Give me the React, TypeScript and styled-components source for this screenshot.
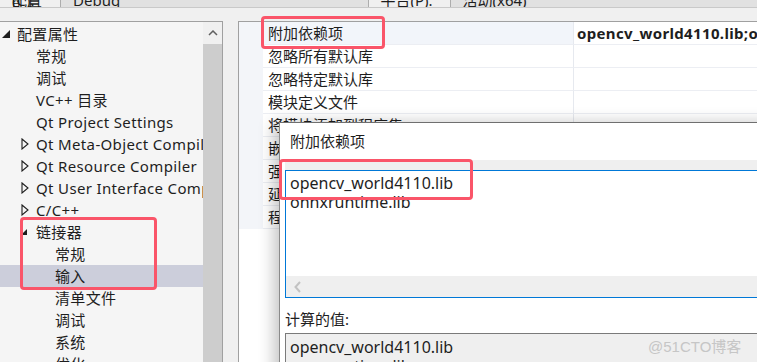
import styled, { createGlobalStyle } from 'styled-components';

const TREE_ITEMS: { label: string; level: number; arrow?: 'open' | 'closed' | 'openSmall'; selected?: boolean }[] = [
  { label: '配置属性', level: 0, arrow: 'open' },
  { label: '常规', level: 1 },
  { label: '调试', level: 1 },
  { label: 'VC++ 目录', level: 1 },
  { label: 'Qt Project Settings', level: 1 },
  { label: 'Qt Meta-Object Compiler', level: 1, arrow: 'closed' },
  { label: 'Qt Resource Compiler', level: 1, arrow: 'closed' },
  { label: 'Qt User Interface Compiler', level: 1, arrow: 'closed' },
  { label: 'C/C++', level: 1, arrow: 'closed' },
  { label: '链接器', level: 1, arrow: 'openSmall' },
  { label: '常规', level: 2 },
  { label: '输入', level: 2, selected: true },
  { label: '清单文件', level: 2 },
  { label: '调试', level: 2 },
  { label: '系统', level: 2 },
  { label: '优化', level: 2 },
];

const PROPERTY_ROWS = [
  '附加依赖项',
  '忽略所有默认库',
  '忽略特定默认库',
  '模块定义文件',
  '将模块添加到程序集',
  '嵌入托管资源文件',
  '强制符号引用',
  '延迟加载的 DLL',
  '程序集链接资源',
];

const GlobalStyle = createGlobalStyle`
  html, body {
    margin: 0;
    padding: 0;
    background: #f0f0f0;
  }
  body {
    font-family: "Noto Sans", "Noto Sans CJK SC", sans-serif;
  }
`;

function App() {
  return (
    <>
      <GlobalStyle />
      <Window>
        <TabBar>
          <Tab>配置(C):</Tab>
          <Tab combo>Debug</Tab>
          <Tab light>平台(P):</Tab>
          <Tab combo>活动(x64)</Tab>
        </TabBar>
        <Main>
          <TreePanel>
            <TreeList>
              {TREE_ITEMS.map((item, i) => (
                <TreeRow key={i} level={item.level} selected={item.selected}>
                  <Arrow>
                    {item.arrow === 'open' && <OpenArrow size={8} />}
                    {item.arrow === 'openSmall' && <OpenArrow size={6} />}
                    {item.arrow === 'closed' && <ClosedArrow />}
                  </Arrow>
                  <TreeLabel>{item.label}</TreeLabel>
                </TreeRow>
              ))}
            </TreeList>
            <VScroll>
              <ScrollButton>
                <svg width="10" height="6" viewBox="0 0 10 6">
                  <path d="M1 5 L5 1 L9 5" fill="none" stroke="#606060" strokeWidth="1.5" />
                </svg>
              </ScrollButton>
              <ScrollThumb />
            </VScroll>
          </TreePanel>
          <GridPanel>
            <GridRows>
              {PROPERTY_ROWS.map((name, i) => (
                <GridRow key={name} selected={i === 0}>
                  <Gutter />
                  <NameCell>{name}</NameCell>
                  <ValueCell>{i === 0 ? 'opencv_world4110.lib;onnxruntime.lib;%(AdditionalDependencies)' : ''}</ValueCell>
                </GridRow>
              ))}
            </GridRows>
          </GridPanel>
        </Main>

        <Dialog>
          <DialogTitle>附加依赖项</DialogTitle>
          <ToolStrip />
          <EditBox>
            <EditText>
              <Line>opencv_world4110.lib</Line>
              <Line>onnxruntime.lib</Line>
            </EditText>
            <HScroll>
              <svg width="8" height="12" viewBox="0 0 8 12">
                <path d="M6 1 L1.5 6 L6 11" fill="none" stroke="#c2c2c2" strokeWidth="2" />
              </svg>
            </HScroll>
          </EditBox>
          <ComputedLabel>计算的值:</ComputedLabel>
          <ComputedBox>
            <Line>opencv_world4110.lib</Line>
            <Line>onnxruntime.lib</Line>
          </ComputedBox>
        </Dialog>

        <Highlight style={{ left: 261, top: 16, width: 124, height: 33 }} />
        <Highlight style={{ left: 279, top: 159, width: 194, height: 41 }} />
        <Highlight style={{ left: 20, top: 217, width: 137, height: 73 }} />
        <Watermark>@51CTO博客</Watermark>
      </Window>
    </>
  );
}

function OpenArrow({ size }: { size: number }) {
  return (
    <svg width={size} height={size} viewBox="0 0 8 8">
      <path d="M8 0 L8 8 L0 8 Z" fill="#1e1e1e" />
    </svg>
  );
}

function ClosedArrow() {
  return (
    <svg width="8" height="12" viewBox="0 0 8 12">
      <path d="M1 1 L7 6 L1 11 Z" fill="none" stroke="#1e1e1e" strokeWidth="1.1" />
    </svg>
  );
}

export default App;

const Window = styled.div`
  position: relative;
  width: 757px;
  height: 362px;
  overflow: hidden;
  background: #f0f0f0;
  color: #1e1e1e;
`;

const TabBar = styled.div`
  display: flex;
  height: 7px;
  overflow: hidden;
  border-bottom: 1px solid #c9c9c9;
  margin-bottom: 13px;
`;

const Tab = styled.div<{ combo?: boolean; light?: boolean }>`
  height: 7px;
  line-height: 0;
  font-size: 15px;
  padding-left: 12px;
  box-sizing: border-box;
  width: ${(p) => (p.combo ? '247px' : '82px')};
  flex: ${(p) => (p.combo ? '1 0 auto' : '0 0 auto')};
  background: ${(p) => (p.combo ? '#e1e1e1' : '#f0f0f0')};
  border-left: 1px solid #adadad;
  overflow: hidden;
  &:first-child {
    width: 60px;
    border-left: none;
  }
`;

const Main = styled.div`
  display: flex;
  height: 341px;
`;

const TreePanel = styled.div`
  display: flex;
  width: 223px;
  border-top: 1px solid #a0a0a0;
  border-right: 1px solid #a0a0a0;
  box-sizing: border-box;
  background: #f5f5f5;
`;

const TreeList = styled.div`
  flex: 1;
  padding-top: 1px;
  overflow: hidden;
`;

const TreeRow = styled.div<{ level: number; selected?: boolean }>`
  display: flex;
  align-items: center;
  height: 22px;
  padding-left: ${(p) => (p.level === 0 ? 2 : p.level === 1 ? 21 : 40)}px;
  background: ${(p) => (p.selected ? '#cccedb' : 'transparent')};
  white-space: nowrap;
`;

const Arrow = styled.span`
  display: inline-flex;
  align-items: center;
  justify-content: flex-start;
  width: 15px;
  flex: 0 0 15px;
`;

const TreeLabel = styled.span`
  font-size: 15px;
  line-height: 22px;
  letter-spacing: 0.35px;
`;

const VScroll = styled.div`
  display: flex;
  flex-direction: column;
  width: 19px;
  background: #f0f0f0;
`;

const ScrollButton = styled.div`
  height: 22px;
  display: flex;
  align-items: center;
  justify-content: center;
`;

const ScrollThumb = styled.div`
  flex: 1;
  background: #cdcdcd;
`;

const GridPanel = styled.div`
  flex: 1;
  margin-left: 15px;
  border-top: 1px solid #a0a0a0;
  border-left: 1px solid #a0a0a0;
  background: #ffffff;
`;

const GridRows = styled.div``;

const GridRow = styled.div<{ selected?: boolean }>`
  display: flex;
  height: 23px;
  background: ${(p) => (p.selected ? '#f2f5fa' : '#ffffff')};
`;

const Gutter = styled.div`
  width: 24px;
  flex: 0 0 24px;
  background: #f3f5f9;
`;

const NameCell = styled.div`
  width: 311px;
  flex: 0 0 311px;
  padding-left: 5px;
  box-sizing: border-box;
  font-size: 15px;
  line-height: 22px;
  border-bottom: 1px solid #eceef3;
  border-right: 1px solid #e6e9ef;
  white-space: nowrap;
  overflow: hidden;
`;

const ValueCell = styled.div`
  flex: 1;
  padding-left: 3px;
  font-size: 15px;
  font-weight: 700;
  line-height: 22px;
  letter-spacing: 0.35px;
  border-bottom: 1px solid #eceef3;
  white-space: nowrap;
  overflow: hidden;
  background: #ffffff;
`;

const Dialog = styled.div`
  position: absolute;
  left: 279px;
  top: 122px;
  width: 520px;
  height: 260px;
  box-sizing: border-box;
  border-top: 1px solid #6f6f6f;
  border-left: 1px solid #8a8a8a;
  background: #ffffff;
  box-shadow: -6px 0 14px rgba(0, 0, 0, 0.22);
  padding-left: 5px;
`;

const DialogTitle = styled.div`
  height: 37px;
  padding-left: 5px;
  font-size: 15px;
  line-height: 37px;
`;

const ToolStrip = styled.div`
  height: 10px;
  background: #efefef;
`;

const EditBox = styled.div`
  display: flex;
  flex-direction: column;
  height: 128px;
  box-sizing: border-box;
  border: 1px solid #0078d7;
  border-right: none;
  background: #ffffff;
`;

const EditText = styled.div`
  flex: 1;
  padding: 3px 0 0 4px;
`;

const Line = styled.div`
  font-size: 16px;
  line-height: 19px;
  white-space: nowrap;
`;

const HScroll = styled.div`
  height: 21px;
  display: flex;
  align-items: center;
  padding-left: 8px;
  background: #efefef;
`;

const ComputedLabel = styled.div`
  height: 35px;
  font-size: 15px;
  line-height: 42px;
`;

const ComputedBox = styled.div`
  height: 60px;
  border-top: 1px solid #7a7a7a;
  border-left: 1px solid #7a7a7a;
  background: #efefef;
  padding: 4px 0 0 4px;
`;

const Highlight = styled.div`
  position: absolute;
  box-sizing: border-box;
  border: 3px solid #fa5569;
  border-radius: 4px;
  pointer-events: none;
`;

const Watermark = styled.div`
  position: absolute;
  left: 648px;
  top: 335px;
  font-size: 15px;
  color: #c6c6c6;
  font-family: "Liberation Sans", "Noto Sans CJK SC", sans-serif;
`;
